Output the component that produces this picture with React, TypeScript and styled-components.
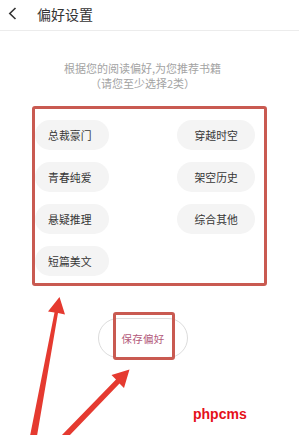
import React from "react";
import styled, { createGlobalStyle } from "styled-components";

const Global = createGlobalStyle`
  html, body { margin: 0; padding: 0; background: #fff; }
  body { font-family: "Noto Sans CJK SC", "Noto Sans", sans-serif; }
`;

const Page = styled.div`
  position: relative;
  width: 299px;
  height: 435px;
  overflow: hidden;
  background: #fff;
`;

const Header = styled.div`
  height: 31px;
  box-sizing: border-box;
  display: flex;
  align-items: center;
  padding: 0 0 3px 8px;
  gap: 20px;
  border-bottom: 1px solid #ececec;
`;

const BackIcon = styled.svg`
  width: 9px;
  height: 13px;
  flex: none;
`;

const Title = styled.div`
  font-size: 14px;
  color: #333;
  letter-spacing: 0;
`;

const Intro = styled.div`
  margin-top: 30px;
  padding-right: 14px;
  text-align: center;
  font-size: 11px;
  line-height: 15px;
  color: #a3a3a3;
`;

const TagBox = styled.div`
  margin: 15px 32px 0 32px;
  height: 180px;
  box-sizing: border-box;
  border: 3px solid #c95a51;
  border-radius: 3px;
  padding: 11px 9px 0 0;
  display: grid;
  grid-template-columns: auto auto;
  justify-content: space-between;
  align-content: start;
  row-gap: 12px;
`;

const Tag = styled.div<{ $side: "left" | "right" }>`
  height: 30px;
  border-radius: 15px;
  background: #f4f4f4;
  color: #363636;
  font-size: 10.8px;
  letter-spacing: 0.1px;
  display: flex;
  align-items: center;
  padding: ${(p) => (p.$side === "left" ? "0 17px 0 13px" : "0 17px")};
  justify-self: ${(p) => (p.$side === "left" ? "start" : "end")};
`;

const SaveRow = styled.div`
  display: flex;
  justify-content: center;
  padding-right: 13px;
  margin-top: 32px;
`;

const SaveWrap = styled.div`
  position: relative;
`;

const SaveButton = styled.button`
  width: 90px;
  height: 40px;
  border: 1px solid #dcdcdc;
  border-radius: 20px;
  background: #fff;
  color: #b35a7b;
  font-family: "Noto Sans CJK SC", sans-serif;
  font-size: 10.5px;
  letter-spacing: 0.3px;
  padding: 0;
`;

const Highlight = styled.div`
  position: absolute;
  left: 15px;
  top: -6px;
  width: 62px;
  height: 48px;
  box-sizing: border-box;
  border: 3px solid #c95a51;
  border-radius: 3px;
  pointer-events: none;
`;

const Arrows = styled.svg`
  position: absolute;
  left: 0;
  top: 0;
  width: 299px;
  height: 435px;
  pointer-events: none;
`;

const Watermark = styled.div`
  position: absolute;
  left: 193px;
  top: 406px;
  font-family: "Liberation Sans", Arial, sans-serif;
  font-weight: bold;
  font-size: 14px;
  color: #e5101a;
  letter-spacing: 0;
`;

const tags: { text: string; side: "left" | "right" }[] = [
  { text: "总裁豪门", side: "left" },
  { text: "穿越时空", side: "right" },
  { text: "青春纯爱", side: "left" },
  { text: "架空历史", side: "right" },
  { text: "悬疑推理", side: "left" },
  { text: "综合其他", side: "right" },
  { text: "短篇美文", side: "left" },
];

export default function App() {
  return (
    <Page>
      <Global />
      <Header>
        <BackIcon viewBox="0 0 9 13">
          <polyline points="7.5,1 1.8,6.5 7.5,12" fill="none" stroke="#333" strokeWidth="1.6" />
        </BackIcon>
        <Title>偏好设置</Title>
      </Header>
      <Intro>
        根据您的阅读偏好,为您推荐书籍
        <br />
        （请您至少选择2类）
      </Intro>
      <TagBox>
        {tags.map((t) => (
          <Tag key={t.text} $side={t.side}>
            {t.text}
          </Tag>
        ))}
      </TagBox>
      <SaveRow>
        <SaveWrap>
          <SaveButton>保存偏好</SaveButton>
          <Highlight />
        </SaveWrap>
      </SaveRow>
      <Arrows viewBox="0 0 299 435">
        <polygon
          points="30,436 37,436 58,313 65,314.5 59.5,297 48,311.5 54.5,312.5"
          fill="#e53a30"
        />
        <polygon
          points="61,436 69,436 119.5,383.5 124,388 129.5,369.5 111.5,375 116,379.5"
          fill="#e53a30"
        />
      </Arrows>
      <Watermark>phpcms</Watermark>
    </Page>
  );
}
